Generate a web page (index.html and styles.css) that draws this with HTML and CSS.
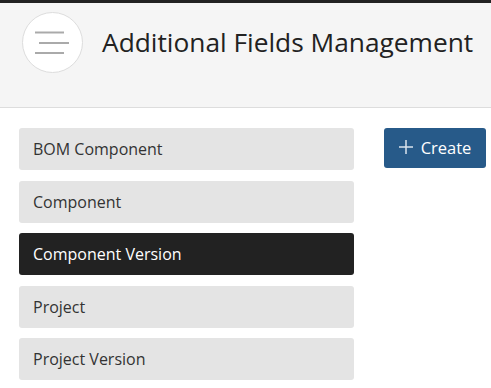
FILE: index.html
```html
<!DOCTYPE html>
<html lang="en">
<head>
    <meta charset="UTF-8">
    <title>Additional Fields Management</title>
    <link rel="stylesheet" href="styles.css">
</head>
<body>
    <div class="page-header">
        <button class="menu-toggle" aria-label="Menu">
            <svg width="36" height="24" viewBox="0 0 36 24">
                <line x1="0" y1="1.5" x2="29" y2="1.5" />
                <line x1="4" y1="12" x2="34" y2="12" />
                <line x1="0" y1="22" x2="29" y2="22" />
            </svg>
        </button>
        <h1 class="page-title">Additional Fields Management</h1>
    </div>

    <div class="content">
        <ul class="object-list">
            <li class="object-item">BOM Component</li>
            <li class="object-item">Component</li>
            <li class="object-item active">Component Version</li>
            <li class="object-item">Project</li>
            <li class="object-item">Project Version</li>
        </ul>
        <div class="actions">
            <button class="btn-create">
                <svg width="14" height="14" viewBox="0 0 14 14">
                    <line x1="7" y1="0" x2="7" y2="14" />
                    <line x1="0" y1="7" x2="14" y2="7" />
                </svg>
                Create
            </button>
        </div>
    </div>
</body>
</html>
```

FILE: styles.css
```css
body {
    margin: 0;
    font-family: "Open Sans", Arial, sans-serif;
    background: #fff;
    color: #333;
    border-top: 3px solid #222;
}
.page-header {
    height: 105px;
    background: #f5f5f5;
    border-bottom: 1px solid #ddd;
    display: flex;
    align-items: flex-start;
    padding-left: 22px;
    box-sizing: border-box;
}
.menu-toggle {
    width: 61px;
    height: 61px;
    margin-top: 9px;
    border-radius: 50%;
    border: 1px solid #ddd;
    background: #fff;
    padding: 0;
    display: flex;
    align-items: center;
    justify-content: center;
    cursor: pointer;
}
.menu-toggle svg {
    margin-left: 1px;
}
.menu-toggle line {
    stroke: #aaa;
    stroke-width: 2;
}
.page-title {
    margin: 0 0 0 19px;
    padding-top: 21px;
    font-size: 26.3px;
    font-weight: 400;
    color: #222;
    line-height: 36px;
}
.content {
    display: flex;
    align-items: flex-start;
    padding: 20px 0 0 19px;
    gap: 30px;
}
.object-list {
    list-style: none;
    margin: 0;
    padding: 0;
    width: 335px;
}
.object-item {
    background: #e4e4e4;
    border-radius: 3px;
    height: 42px;
    line-height: 42px;
    padding-left: 14px;
    margin-bottom: 10.5px;
    font-size: 16px;
    color: #333;
}
.object-item.active {
    background: #222;
    color: #fff;
}
.btn-create {
    width: 102px;
    height: 40px;
    background: #275a89;
    color: #fff;
    border: none;
    border-radius: 3px;
    font-family: "Open Sans", Arial, sans-serif;
    font-size: 16.5px;
    display: flex;
    align-items: center;
    justify-content: center;
    gap: 8px;
    padding: 0 0 2px;
    cursor: pointer;
}
.btn-create line {
    stroke: #dbe4ee;
    stroke-width: 1.5;
}
```
